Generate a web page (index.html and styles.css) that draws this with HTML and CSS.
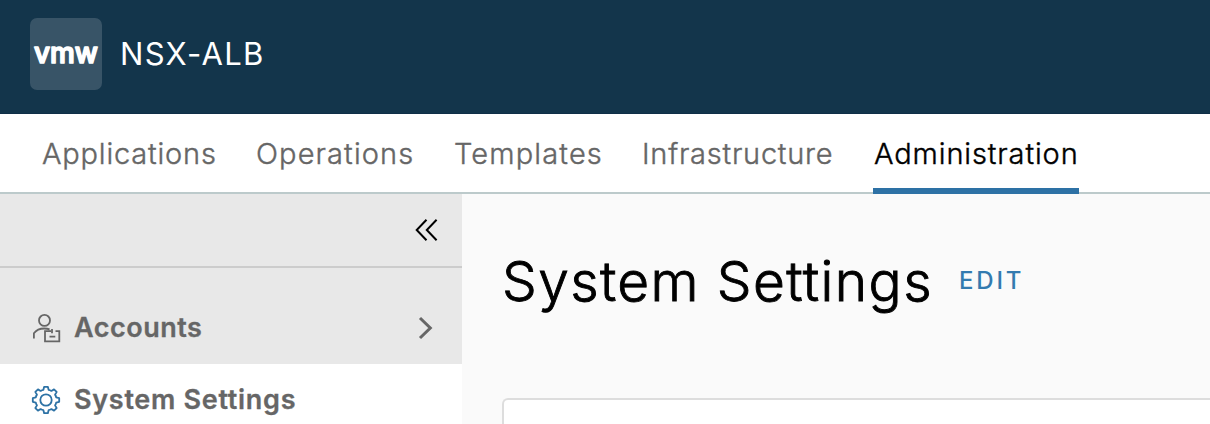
FILE: index.html
```html
<!DOCTYPE html>
<html lang="en">
<head>
<meta charset="utf-8">
<title>NSX-ALB</title>
<link rel="stylesheet" href="styles.css">
</head>
<body>
<header class="header">
  <div class="logo">
    <svg width="72" height="72" viewBox="0 0 72 72"><text class="logo-text" x="4" y="44.500" textLength="64" lengthAdjust="spacingAndGlyphs">vmw</text></svg>
  </div>
  <span class="brand">NSX-ALB</span>
</header>
<nav class="nav">
  <a class="tab applications">Applications</a>
  <a class="tab operations">Operations</a>
  <a class="tab templates">Templates</a>
  <a class="tab infrastructure">Infrastructure</a>
  <a class="tab administration active">Administration</a>
</nav>
<div class="body">
  <aside class="sidebar">
    <div class="collapse">
      <svg width="26" height="26" viewBox="0 0 26 26" fill="none" stroke="#000" stroke-width="2"><path d="M12.5 2.8 2.7 13l9.8 10.2M22.6 2.8 12.8 13l9.8 10.2"/></svg>
    </div>
    <div class="group">
      <svg class="icon" width="32" height="32" viewBox="0 0 32 32" fill="none" stroke="#666" stroke-width="1.8"><circle cx="14.5" cy="8.4" r="5.5"/><path d="M3.9 26.5v-5.2c2.3-3.1 6-4.8 10.3-4.8 2.1 0 3.8.3 5.400.900M21 19.200h-6v10.200h14.300V19.200h-3.800M22 16.900v4.300M19.500 24.700h5.800"/></svg>
      <span class="label accounts">Accounts</span>
      <svg class="chevron" width="20" height="26" viewBox="0 0 20 26" fill="none" stroke="#666" stroke-width="3"><path d="m4 3 10.3 10L4 23"/></svg>
    </div>
    <div class="item">
      <svg class="icon" width="32" height="32" viewBox="-16 -16 32 32" fill="none" stroke="#2d72a5" stroke-width="1.8" stroke-linejoin="round"><circle r="5.7"/><path d="M-1.85-13.2H1.85L2.6-10.2Q4-10 5.37-9.05L8.03-10.64 10.64-8.03 9.05-5.37Q10-4 10.2-2.6L13.2-1.85V1.85L10.2 2.6Q10 4 9.05 5.37L10.64 8.03 8.03 10.64 5.37 9.05Q4 10 2.6 10.2L1.85 13.2H-1.85L-2.6 10.2Q-4 10-5.37 9.05L-8.03 10.64-10.64 8.03-9.05 5.37Q-10 4-10.2 2.6L-13.2 1.85V-1.85L-10.2-2.6Q-10-4-9.05-5.37L-10.64-8.03-8.03-10.64-5.37-9.05Q-4-10-2.6-10.2Z"/></svg>
      <span class="label settings">System Settings</span>
    </div>
  </aside>
  <main class="main">
    <div class="heading">
      <h1 class="title">System Settings</h1>
      <a class="edit">EDIT</a>
    </div>
    <section class="card"></section>
  </main>
</div>
</body>
</html>
```
FILE: styles.css
```css
* { box-sizing: border-box; }
body { margin: 0; height: 424px; overflow: hidden; font-family: Inter, sans-serif; background: #fafafa; color: #000; }
svg { display: block; flex: none; }
.header { display: flex; height: 114px; padding: 18px 30px; gap: 18px; background: #13354b; border-bottom: 1px solid #102f47; }
.logo { width: 72px; height: 72px; border-radius: 7px; background: #385467; }
.logo-text { font: 500 29px Inter, sans-serif; fill: #fff; stroke: #fff; stroke-width: 1.7px; stroke-linejoin: round; }
.brand { color: #fff; font-size: 31px; font-weight: 400; line-height: 72px; letter-spacing: 1.3px; white-space: nowrap; }
.nav { display: flex; height: 80px; padding-left: 41px; gap: 38px; background: #fff; border-bottom: 2px solid #bccacb; }
.tab { flex: none; height: 80px; padding: 0 1px; font-size: 29px; font-weight: 300; line-height: 80px; color: #666; white-space: nowrap; -webkit-text-stroke: 0.4px currentColor; }
.applications { width: 176px; letter-spacing: 0.8px; }
.operations { width: 160px; letter-spacing: 1.1px; }
.templates { width: 150px; letter-spacing: 1.15px; }
.infrastructure { width: 194px; letter-spacing: 0.75px; }
.administration { width: 206px; letter-spacing: 0.87px; }
.active { color: #000; border-bottom: 6px solid #2d71a5; }
.body { display: flex; height: 230px; }
.sidebar { flex: none; width: 462px; background: #e8e8e8; }
.collapse { display: flex; align-items: center; justify-content: flex-end; height: 74px; padding-right: 22px; border-bottom: 2px solid #ccc; }
.group { display: flex; align-items: center; height: 96px; padding: 23px 26px 0 30px; }
.item { display: flex; align-items: center; height: 60px; padding: 10px 0 0 30px; background: #fff; }
.item .icon { margin-top: 2px; }
.label { margin-left: 12px; font-size: 27px; font-weight: 600; color: #666; white-space: nowrap; -webkit-text-stroke: 0.3px currentColor; }
.accounts { letter-spacing: 0.5px; }
.settings { letter-spacing: 0.7px; }
.chevron { margin-left: auto; }
.main { flex: 1; padding: 48px 0 0 40px; }
.heading { display: flex; height: 156px; }
.title { width: 457px; margin: 0; font-size: 55px; font-weight: 300; line-height: 79px; letter-spacing: 1.4px; white-space: nowrap; -webkit-text-stroke: 0.9px currentColor; }
.edit { font-size: 24px; font-weight: 500; line-height: 78px; letter-spacing: 2.8px; color: #337aaf; }
.card { height: 26px; background: #fff; border: 2px solid #ddd; border-width: 2px 0 0 2px; border-top-left-radius: 6px; }
```
